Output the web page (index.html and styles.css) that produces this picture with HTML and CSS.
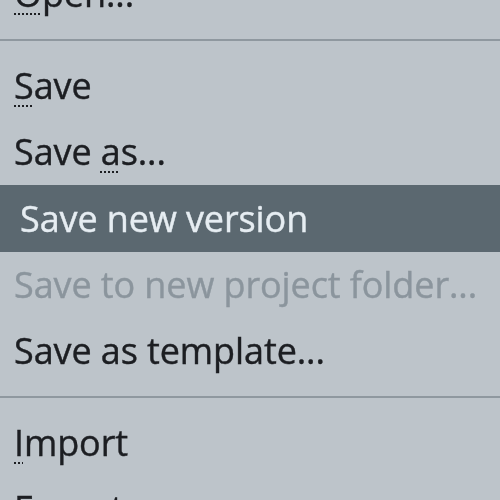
FILE: index.html
```html
<!DOCTYPE html>
<html lang="en">
<head>
    <meta charset="UTF-8">
    <title>File menu</title>
    <link rel="stylesheet" href="styles.css">
</head>
<body>
    <div class="menu">
        <div class="item"><span class="key">O</span>pen...</div>
        <div class="separator"></div>
        <div class="item"><span class="key">S</span>ave</div>
        <div class="item">Save <span class="key">a</span>s...</div>
        <div class="item active">Save new version</div>
        <div class="item disabled">Save to new project folder...</div>
        <div class="item">Save as template...</div>
        <div class="separator"></div>
        <div class="item"><span class="key">I</span>mport</div>
        <div class="item">Export</div>
    </div>
</body>
</html>
```

FILE: styles.css
```css
:root {
    --fundo: #bdc4ca;
    --texto: #1c1e22;
    --desativado: #8b959d;
    --destaque: #5b6870;
    --texto-destaque: #e6edf2;
    --linha: #8f989f;
}

* {
    margin: 0;
    padding: 0;
    box-sizing: border-box;
}

body {
    background-color: var(--fundo);
    font-family: 'Open Sans', 'Noto Sans', sans-serif;
    overflow: hidden;
    height: 500px;
}

.menu {
    display: flex;
    flex-direction: column;
    margin-top: -39px;
    filter: blur(0.5px);
}

.item {
    height: 66px;
    line-height: 66px;
    padding-left: 14px;
    font-size: 36px;
    letter-spacing: -0.1px;
    color: var(--texto);
    white-space: nowrap;
    -webkit-text-stroke: 0.4px currentColor;
}

.item.active {
    height: 67px;
    line-height: 67px;
    padding-left: 20px;
    background-color: var(--destaque);
    color: var(--texto-destaque);
}

.item.disabled {
    color: var(--desativado);
}

.key {
    text-decoration: underline dotted;
    text-decoration-thickness: 2px;
    text-underline-offset: 6px;
}

.separator {
    height: 26px;
    display: flex;
    align-items: center;
}

.separator::before {
    content: '';
    display: block;
    width: 100%;
    height: 2px;
    background-color: var(--linha);
}
```
